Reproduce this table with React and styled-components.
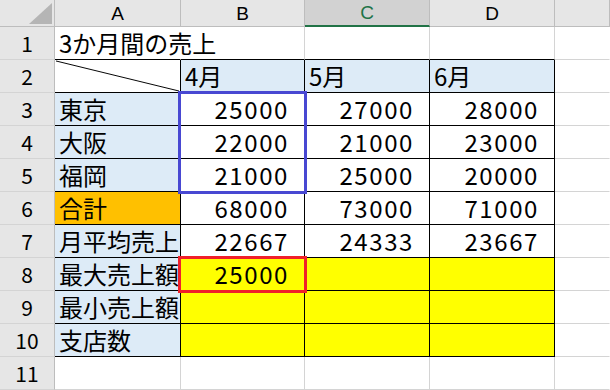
import React from 'react';
import styled, { createGlobalStyle } from 'styled-components';

const GlobalStyle = createGlobalStyle`
  html, body {
    margin: 0;
    padding: 0;
    background: #fff;
    overflow: hidden;
  }
`;

const GRID = '#d4d4d4';
const HEAD_LINE = '#bdbdbd';
const INK = '#000';
const BLUE = '#ddebf7';
const ORANGE = '#ffc000';
const YELLOW = '#ffff00';

const Sheet = styled.div`
  display: grid;
  grid-template-columns: 55px 126px 124px 125px 125px 1fr;
  grid-template-rows: 27px repeat(11, 33px);
  width: 610px;
  height: 390px;
  overflow: hidden;
  background: #fff;
  font-family: "Noto Sans CJK JP", "Noto Sans", sans-serif;
`;

const Corner = styled.div`
  grid-row: 1;
  grid-column: 1;
  box-sizing: border-box;
  display: flex;
  justify-content: flex-end;
  align-items: flex-end;
  padding: 0 2px 2px 0;
  background: #e6e6e6;
  border-right: 1px solid ${HEAD_LINE};
  border-bottom: 1px solid ${HEAD_LINE};
`;

const ColHead = styled.div`
  grid-row: 1;
  grid-column: ${p => p.$col};
  box-sizing: border-box;
  display: flex;
  align-items: center;
  justify-content: center;
  background: ${p => (p.$active ? '#d2d2d2' : '#e6e6e6')};
  color: ${p => (p.$active ? '#217346' : '#000')};
  border-right: 1px solid ${HEAD_LINE};
  border-bottom: ${p => (p.$active ? '2px solid #217346' : `1px solid ${HEAD_LINE}`)};
  font-family: "Liberation Sans", Arial, sans-serif;
  font-size: 19px;
  padding-top: 1px;
`;

const RowHead = styled.div`
  grid-row: ${p => p.$row};
  grid-column: 1;
  box-sizing: border-box;
  display: flex;
  align-items: center;
  justify-content: center;
  background: #e6e6e6;
  border-right: 1px solid ${HEAD_LINE};
  border-bottom: 1px solid ${GRID};
  font-size: 21px;
  color: #000;
`;

const Cell = styled.div`
  grid-row: ${p => p.$row};
  grid-column: ${p => p.$col};
  position: relative;
  box-sizing: border-box;
  display: flex;
  align-items: center;
  justify-content: ${p => (p.$num ? 'flex-end' : 'flex-start')};
  padding: ${p => (p.$num ? '0 15px 0 4px' : '0 4px')};
  background: ${p => p.$bg || 'transparent'};
  border-right: 1px solid ${p => p.$right || GRID};
  border-bottom: 1px solid ${p => p.$bottom || GRID};
  overflow-x: ${p => (p.$clip ? 'clip' : 'visible')};
  overflow-y: visible;
  white-space: nowrap;
  font-size: 24px;
  line-height: 1.25;
  letter-spacing: ${p => (p.$num ? '1.6px' : '0')};
  color: #000;
  z-index: ${p => (p.$spill ? 1 : 0)};
`;

const Diagonal = styled.svg`
  position: absolute;
  inset: 0;
  width: 100%;
  height: 100%;
`;

const Marker = styled.div`
  grid-column: ${p => p.$col};
  grid-row: ${p => p.$rows};
  border: 3px solid ${p => p.$color};
  margin: -2px -2px -2px -3px;
  pointer-events: none;
  z-index: 2;
`;

const columns = ['A', 'B', 'C', 'D', ''];

const labels = {
  3: '東京',
  4: '大阪',
  5: '福岡',
  6: '合計',
  7: '月平均売上',
  8: '最大売上額',
  9: '最小売上額',
  10: '支店数',
};

const values = {
  3: [25000, 27000, 28000],
  4: [22000, 21000, 23000],
  5: [21000, 25000, 20000],
  6: [68000, 73000, 71000],
  7: [22667, 24333, 23667],
  8: [25000, null, null],
  9: [null, null, null],
  10: [null, null, null],
};

const months = ['4月', '5月', '6月'];

function renderRow(r) {
  const gr = r + 1;
  const inTable = r >= 2 && r <= 10;
  const out = [
    <RowHead key={`h${r}`} $row={gr}>
      {r}
    </RowHead>,
  ];

  // column A
  if (r === 1) {
    out.push(
      <Cell key={`${r}A`} $row={gr} $col={2} $spill $right="transparent" $bottom={INK}>
        3か月間の売上
      </Cell>
    );
  } else if (r === 2) {
    out.push(
      <Cell key={`${r}A`} $row={gr} $col={2} $right={INK} $bottom={INK}>
        <Diagonal viewBox="0 0 126 33" preserveAspectRatio="none">
          <line x1="1" y1="1" x2="125" y2="32" stroke="#000" strokeWidth="1" />
        </Diagonal>
      </Cell>
    );
  } else if (inTable) {
    out.push(
      <Cell key={`${r}A`} $row={gr} $col={2} $clip $bg={r === 6 ? ORANGE : BLUE} $right={INK} $bottom={INK}>
        {labels[r]}
      </Cell>
    );
  } else {
    out.push(<Cell key={`${r}A`} $row={gr} $col={2} />);
  }

  // columns B-D
  for (let c = 0; c < 3; c++) {
    const key = `${r}${'BCD'[c]}`;
    const col = c + 3;
    if (r === 1) {
      out.push(<Cell key={key} $row={gr} $col={col} $bottom={INK} />);
    } else if (r === 2) {
      out.push(
        <Cell key={key} $row={gr} $col={col} $bg={BLUE} $right={INK} $bottom={INK}>
          {months[c]}
        </Cell>
      );
    } else if (inTable) {
      out.push(
        <Cell key={key} $row={gr} $col={col} $num $bg={r >= 8 ? YELLOW : undefined} $right={INK} $bottom={INK}>
          {values[r][c]}
        </Cell>
      );
    } else {
      out.push(<Cell key={key} $row={gr} $col={col} />);
    }
  }

  // column E
  out.push(<Cell key={`${r}E`} $row={gr} $col={6} $right="transparent" />);

  return out;
}

export default function App() {
  const rows = [];
  for (let r = 1; r <= 11; r++) rows.push(...renderRow(r));

  return (
    <>
      <GlobalStyle />
      <Sheet>
        <Corner>
          <svg width="23" height="21" viewBox="0 0 23 21">
            <polygon points="23,0 23,21 0,21" fill="#b5b5b5" />
          </svg>
        </Corner>
        {columns.map((c, i) => (
          <ColHead key={c || 'E'} $col={i + 2} $active={c === 'C'}>
            {c}
          </ColHead>
        ))}
        {rows}
        <Marker $col="3" $rows="4 / 7" $color="#4848d2" />
        <Marker $col="3" $rows="9 / 10" $color="#f0202a" />
      </Sheet>
    </>
  );
}
